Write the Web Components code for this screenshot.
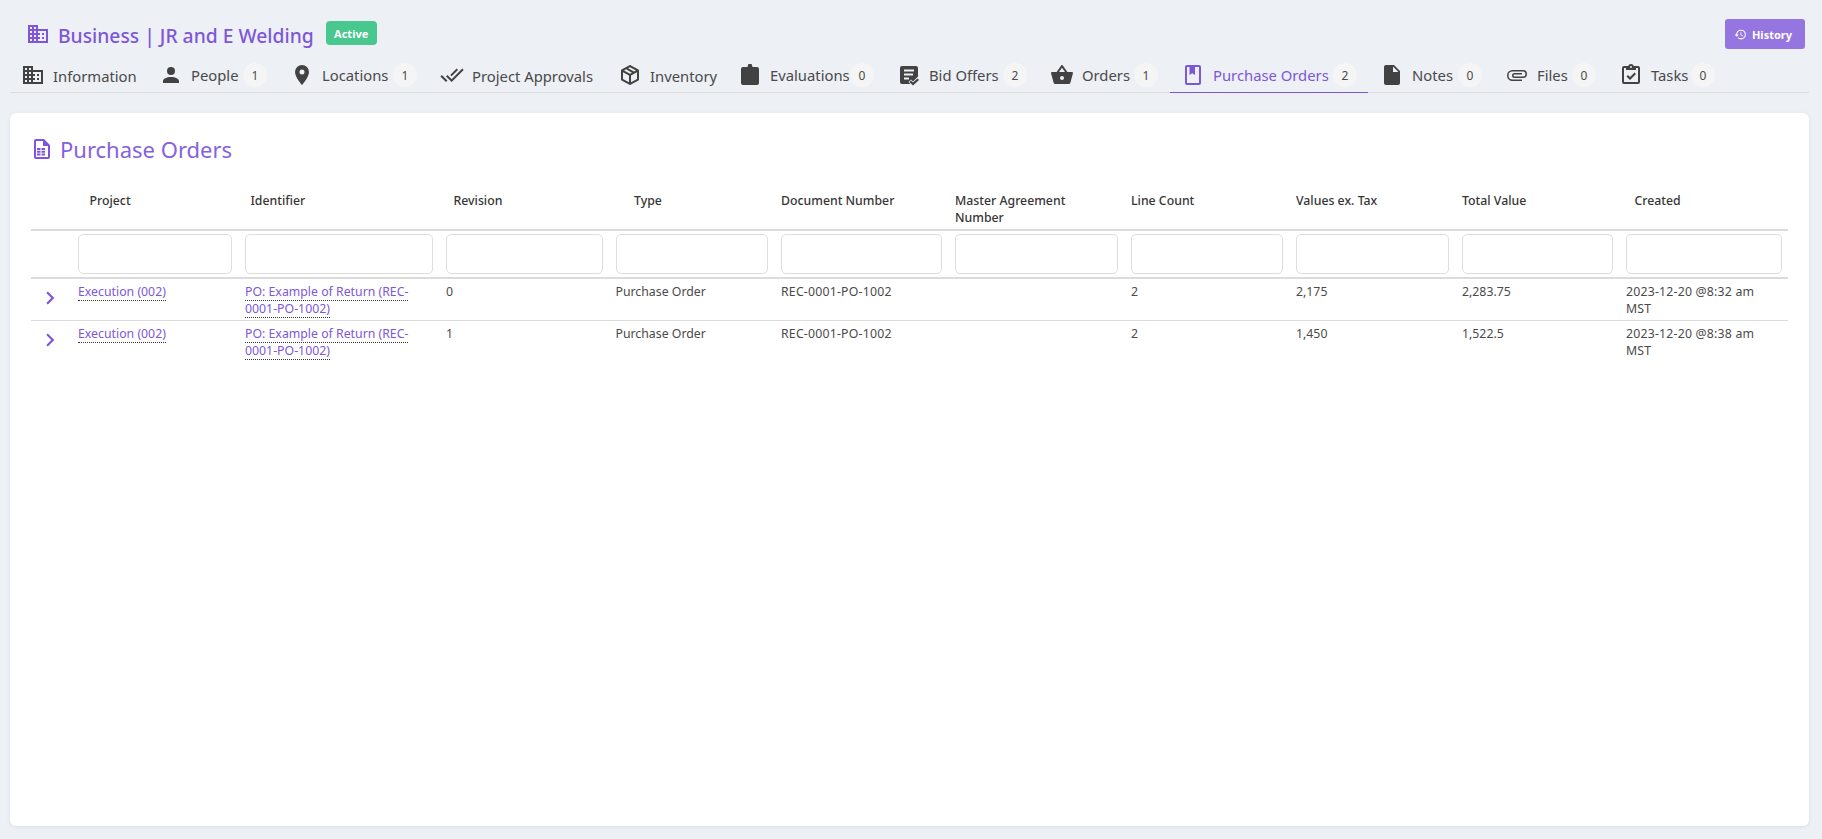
<!DOCTYPE html>
<html>
<head>
<meta charset="utf-8">
<style>
html, body { margin: 0; height: 100%; background: #edf0f4; }
body { font-family: "Noto Sans", "Open Sans", sans-serif; color: #4a4a4a; }
</style>
</head>
<body>
<app-page></app-page>
<script>
const ICONS = {
    domain: 'M18,15H16V17H18M18,11H16V13H18M20,19H12V17H14V15H12V13H14V11H12V9H20M10,7H8V5H10M10,11H8V9H10M10,15H8V13H10M10,19H8V17H10M6,7H4V5H6M6,11H4V9H6M6,15H4V13H6M6,19H4V17H6M12,7V3H2V21H22V7H12Z',
    account: 'M12,4A4,4 0 0,1 16,8A4,4 0 0,1 12,12A4,4 0 0,1 8,8A4,4 0 0,1 12,4M12,14C16.42,14 20,15.79 20,18V20H4V18C4,15.79 7.58,14 12,14Z',
    marker: 'M12,11.5A2.5,2.5 0 0,1 9.5,9A2.5,2.5 0 0,1 12,6.5A2.5,2.5 0 0,1 14.5,9A2.5,2.5 0 0,1 12,11.5M12,2A7,7 0 0,0 5,9C5,14.25 12,22 12,22C12,22 19,14.25 19,9A7,7 0 0,0 12,2Z',
    checkall: 'M0.41,13.41L6,19L7.41,17.58L1.83,12M22.24,5.58L11.66,16.17L7.5,12L6.07,13.41L11.66,19L23.66,7M18,7L16.59,5.58L10.24,11.93L11.66,13.34L18,7Z',
    box: 'M21,16.5C21,16.88 20.79,17.21 20.47,17.38L12.57,21.82C12.41,21.94 12.21,22 12,22C11.79,22 11.59,21.94 11.43,21.82L3.53,17.38C3.21,17.21 3,16.88 3,16.5V7.5C3,7.12 3.21,6.79 3.53,6.62L11.43,2.18C11.59,2.06 11.79,2 12,2C12.21,2 12.41,2.06 12.57,2.18L20.47,6.62C20.79,6.79 21,7.12 21,7.5V16.5M12,4.15L10.11,5.22L16,8.61L17.96,7.5L12,4.15M6.04,7.5L12,10.85L13.96,9.75L8.08,6.35L6.04,7.5M5,15.91L11,19.29V12.58L5,9.21V15.91M19,15.91V9.21L13,12.58V19.29L19,15.91Z',
    clipboard: 'M5,4H9.5L10,2A1,1 0 0,1 11,1H13A1,1 0 0,1 14,2L14.5,4H19A2,2 0 0,1 21,6V20A2,2 0 0,1 19,22H5A2,2 0 0,1 3,20V6A2,2 0 0,1 5,4Z',
    bids: 'M5,3H19A2,2 0 0,1 21,5V13.5L20,14.5L16,18.5L14,16.5L11.5,19L13.5,21H5A2,2 0 0,1 3,19V5A2,2 0 0,1 5,3M7,6.5V8.5H17V6.5H7M7,10.5V12.5H16V10.5H7M7,14.5V16.5H12V14.5H7M20.5,15.5L22,17L16,22.5L12.5,19L14,17.5L16,19.5L20.5,15.5Z',
    basket: 'M5.5,21C4.72,21 4.04,20.55 3.71,19.9V19.9L1.1,10.44L1,10A1,1 0 0,1 2,9H6.58L11.18,2.43C11.36,2.17 11.66,2 12,2C12.34,2 12.65,2.17 12.83,2.44L17.42,9H22A1,1 0 0,1 23,10L22.96,10.29L20.29,19.9C19.96,20.55 19.28,21 18.5,21H5.5M12,4.74L9,9H15L12,4.74M12,13A2,2 0 0,0 10,15A2,2 0 0,0 12,17A2,2 0 0,0 14,15A2,2 0 0,0 12,13Z',
    book: 'M18,2H6C4.89,2 4,2.9 4,4V20A2,2 0 0,0 6,22H18A2,2 0 0,0 20,20V4C20,2.89 19.1,2 18,2M18,20H6V4H8.5V12L11.25,10.2L14,12V4H18V20Z',
    file: 'M13,9V3.5L18.5,9M6,2C4.89,2 4,2.89 4,4V20A2,2 0 0,0 6,22H18A2,2 0 0,0 20,20V8L14,2H6Z',
    clip: 'M7.5,18A5.5,5.5 0 0,1 2,12.5A5.5,5.5 0 0,1 7.5,7H18A4,4 0 0,1 22,11A4,4 0 0,1 18,15H9.5A2.5,2.5 0 0,1 7,12.5A2.5,2.5 0 0,1 9.5,10H17V11.5H9.5A1,1 0 0,0 8.5,12.5A1,1 0 0,0 9.5,13.5H18A2.5,2.5 0 0,0 20.5,11A2.5,2.5 0 0,0 18,8.5H7.5A4,4 0 0,0 3.5,12.5A4,4 0 0,0 7.5,16.5H17V18H7.5Z',
    tasks: 'M19,3H14.82C14.4,1.84 13.3,1 12,1C10.7,1 9.6,1.84 9.18,3H5A2,2 0 0,0 3,5V19A2,2 0 0,0 5,21H19A2,2 0 0,0 21,19V5A2,2 0 0,0 19,3M12,3A1,1 0 0,1 13,4A1,1 0 0,1 12,5A1,1 0 0,1 11,4A1,1 0 0,1 12,3M7,7H17V5H19V19H5V5H7V7M7.5,13.5L9,12L11,14L15.5,9.5L17,11L11,17L7.5,13.5Z',
    filetable: 'M14,2H6A2,2 0 0,0 4,4V20A2,2 0 0,0 6,22H18A2,2 0 0,0 20,20V8L14,2M18,20H6V4H13V9H18V20M7,11V13H10.5V11H7M11.5,11V13H15V11H11.5M7,13.8V15.8H10.5V13.8H7M11.5,13.8V15.8H15V13.8H11.5M7,16.6V18.6H10.5V16.6H7M11.5,16.6V18.6H15V16.6H11.5Z',
    history: 'M13.5,8H12V13L16.28,15.54L17,14.33L13.5,12.25V8M13,3A9,9 0 0,0 4,12H1L4.96,16.03L9,12H6A7,7 0 0,1 13,5A7,7 0 0,1 20,12A7,7 0 0,1 13,19C11.07,19 9.32,18.21 8.06,16.94L6.64,18.36C8.27,20 10.5,21 13,21A9,9 0 0,0 22,12A9,9 0 0,0 13,3',
    chevron: 'M8.59,16.58L13.17,12L8.59,7.41L10,6L16,12L10,18L8.59,16.58Z'
};

class MdIcon extends HTMLElement {
    connectedCallback() {
        const size = this.getAttribute('size') || 24;
        const shadow = this.attachShadow({ mode: 'open' });
        shadow.innerHTML = `<style>
            :host { display: block; flex: none; width: ${size}px; height: ${size}px; }
            svg { width: 100%; height: 100%; fill: currentColor; display: block; }
        </style>
        <svg viewBox="0 0 24 24"><path d="${ICONS[this.getAttribute('name')]}"></path></svg>`;
    }
}
customElements.define('md-icon', MdIcon);

class TabItem extends HTMLElement {
    connectedCallback() {
        const shadow = this.attachShadow({ mode: 'open' });
        const count = this.getAttribute('count');
        const active = this.hasAttribute('active');
        shadow.innerHTML = `<style>
            :host { display: flex; align-items: center; box-sizing: border-box; height: 30px; padding: 0 11px 5px 11px; margin: 0 1px -1px 0;
                    font-size: 14.8px; color: ${active ? '#7e57d9' : '#4a4a4a'};
                    border-bottom: 1px solid ${active ? '#7e57d9' : 'transparent'}; white-space: nowrap; }
            md-icon { color: ${active ? '#7e57d9' : '#424242'}; margin-right: 8px; }
            .label { width: ${this.getAttribute('w')}px; ${count === null ? 'margin-top: 2px;' : ''} }
            .count { width: 24px; height: 24px; border-radius: 50%; background: #f5f5f5; color: #4a4a4a; flex: none;
                     font-size: 12px; display: flex; align-items: center; justify-content: center; margin-left: 4px; }
        </style>
        <md-icon name="${this.getAttribute('icon')}"></md-icon><span class="label"><slot></slot></span>
        ${count !== null ? `<span class="count">${count}</span>` : ''}`;
    }
}
customElements.define('tab-item', TabItem);

class TabBar extends HTMLElement {
    connectedCallback() {
        const shadow = this.attachShadow({ mode: 'open' });
        shadow.innerHTML = `<style>
            :host { display: flex; margin: 0 13px 0 10px; border-bottom: 1px solid #dcdcdc; }
        </style><slot></slot>`;
    }
}
customElements.define('tab-bar', TabBar);

class PageHeader extends HTMLElement {
    connectedCallback() {
        const shadow = this.attachShadow({ mode: 'open' });
        shadow.innerHTML = `<style>
            :host { display: flex; align-items: center; height: 30px; padding: 19px 17px 14px 26px; }
            md-icon { color: #7e57d9; margin-right: 8px; }
            .title { font-size: 19.3px; font-weight: 500; color: #7e57d9; margin-top: 2px; }
            .status { margin-left: 12px; margin-top: -2px; height: 24px; width: 51px; border-radius: 4px; background: #48c78e; color: #fff;
                      font-size: 11px; font-weight: 700; display: flex; align-items: center; justify-content: center; }
            button { margin-left: auto; width: 80px; height: 30px; border: 0; border-radius: 3px; background: #9575e0; color: #fff;
                     font: 700 11px "Noto Sans", sans-serif; display: flex; align-items: center; justify-content: center; gap: 5px; padding: 0 4px 0 0; }
            button md-icon { color: #fff; margin: 0; }
        </style>
        <md-icon name="domain"></md-icon>
        <span class="title">Business | JR and E Welding</span>
        <span class="status">Active</span>
        <button><md-icon name="history" size="13"></md-icon>History</button>`;
    }
}
customElements.define('page-header', PageHeader);

const COLUMNS = [
    { w: 40.5, pad: 0, label: '' },
    { w: 167, pad: 18, label: 'Project' },
    { w: 201, pad: 12, label: 'Identifier' },
    { w: 169.5, pad: 14, label: 'Revision' },
    { w: 165.5, pad: 25, label: 'Type' },
    { w: 173.5, pad: 6.5, label: 'Document Number' },
    { w: 176.5, pad: 7, label: 'Master Agreement<br>Number' },
    { w: 165, pad: 6.5, label: 'Line Count' },
    { w: 166, pad: 6.5, label: 'Values ex. Tax' },
    { w: 164, pad: 6.5, label: 'Total Value' },
    { w: 168.5, pad: 15, label: 'Created' }
];

const ROWS = [
    ['Execution (002)', 'PO: Example of Return (REC-0001-PO-1002)', '0', 'Purchase Order', 'REC-0001-PO-1002', '', '2', '2,175', '2,283.75', '2023-12-20 @8:32 am MST'],
    ['Execution (002)', 'PO: Example of Return (REC-0001-PO-1002)', '1', 'Purchase Order', 'REC-0001-PO-1002', '', '2', '1,450', '1,522.5', '2023-12-20 @8:38 am MST']
];

class OrdersTable extends HTMLElement {
    connectedCallback() {
        const shadow = this.attachShadow({ mode: 'open' });
        const cols = COLUMNS.map(c => `<col style="width:${c.w}px">`).join('');
        const heads = COLUMNS.map(c => `<th style="padding-left:${c.pad}px">${c.label}</th>`).join('');
        const filters = COLUMNS.map((c, i) => i === 0 ? '<td></td>' : '<td><input type="text"></td>').join('');
        const cell = (v, i) => {
            if (i < 2) return `<td><a href="#">${v}</a></td>`;
            if (i === 4) return `<td class="num">${v}</td>`;
            if (i === 9) return `<td class="num date">${v}</td>`;
            return `<td>${v}</td>`;
        };
        const rows = ROWS.map(r => `<tr class="row">
            <td class="toggle"><md-icon name="chevron" size="26"></md-icon></td>
            ${r.map(cell).join('')}
        </tr>`).join('');
        shadow.innerHTML = `<style>
            :host { display: block; margin-top: 31px; }
            table { border-collapse: collapse; table-layout: fixed; width: 1757px; font-size: 12.3px; line-height: 17px; color: #4a4a4a; }
            th { text-align: left; font-weight: 500; color: #363636; vertical-align: top; height: 38px; padding: 0 6.5px 0 6.5px; box-sizing: border-box; }
            thead tr.labels th { border-bottom: 2px solid #dbdbdb; }
            thead tr.filters td { padding: 3px 6.5px 3px; border-bottom: 2px solid #dbdbdb; height: 40px; }
            input { display: block; width: 100%; height: 40px; box-sizing: border-box; border: 1px solid #dedede; border-radius: 5px; background: #fff; padding: 0 8px; outline: none; }
            tr.row td { padding: 4px 6.5px 3px; vertical-align: top; border-bottom: 1px solid #dbdbdb; }
            tr.row:last-child td { border-bottom: 0; }
            tr.row td.toggle { color: #7e57d9; padding: 6px 0 0 6px; }
            tr.row td.num { letter-spacing: .2px; }
            tr.row td.date { padding-right: 20px; }
            a { color: #7e57d9; text-decoration: none; border-bottom: 1px dotted #363636; }
        </style>
        <table>
            <colgroup>${cols}</colgroup>
            <thead>
                <tr class="labels">${heads}</tr>
                <tr class="filters">${filters}</tr>
            </thead>
            <tbody>${rows}</tbody>
        </table>`;
    }
}
customElements.define('orders-table', OrdersTable);

class OrdersCard extends HTMLElement {
    connectedCallback() {
        const shadow = this.attachShadow({ mode: 'open' });
        shadow.innerHTML = `<style>
            :host { display: block; box-sizing: border-box; height: 713px; margin: 20px 13px 0 10px; padding: 24px 20px 0 21px;
                    background: #fff; border-radius: 6px; box-shadow: 0 1px 4px rgba(10,10,10,.08); }
            h2 { margin: 0 0 0 -1px; display: flex; align-items: center; height: 24px; font-size: 22px; font-weight: 400; color: #8562dd; }
            md-icon { margin-right: 6px; color: #7e57d9; }
        </style>
        <h2><md-icon name="filetable"></md-icon>Purchase Orders</h2>
        <orders-table></orders-table>`;
    }
}
customElements.define('orders-card', OrdersCard);

// icon, label, badge count, width of the label, active
const TABS = [
    ['domain', 'Information', null, 83], ['account', 'People', 1, 48], ['marker', 'Locations', 1, 67],
    ['checkall', 'Project Approvals', null, 123], ['box', 'Inventory', null, 65], ['clipboard', 'Evaluations', 0, 76],
    ['bids', 'Bid Offers', 2, 70], ['basket', 'Orders', 1, 48], ['book', 'Purchase Orders', 2, 116, true],
    ['file', 'Notes', 0, 42], ['clip', 'Files', 0, 31], ['tasks', 'Tasks', 0, 36]
];

class AppPage extends HTMLElement {
    connectedCallback() {
        const shadow = this.attachShadow({ mode: 'open' });
        const tabs = TABS.map(t => `<tab-item icon="${t[0]}" w="${t[3]}"${t[2] !== null ? ` count="${t[2]}"` : ''}${t[4] ? ' active' : ''}>${t[1]}</tab-item>`).join('');
        shadow.innerHTML = `<style>:host { display: block; }</style>
        <page-header></page-header>
        <tab-bar>${tabs}</tab-bar>
        <orders-card></orders-card>`;
    }
}
customElements.define('app-page', AppPage);
</script>
</body>
</html>
